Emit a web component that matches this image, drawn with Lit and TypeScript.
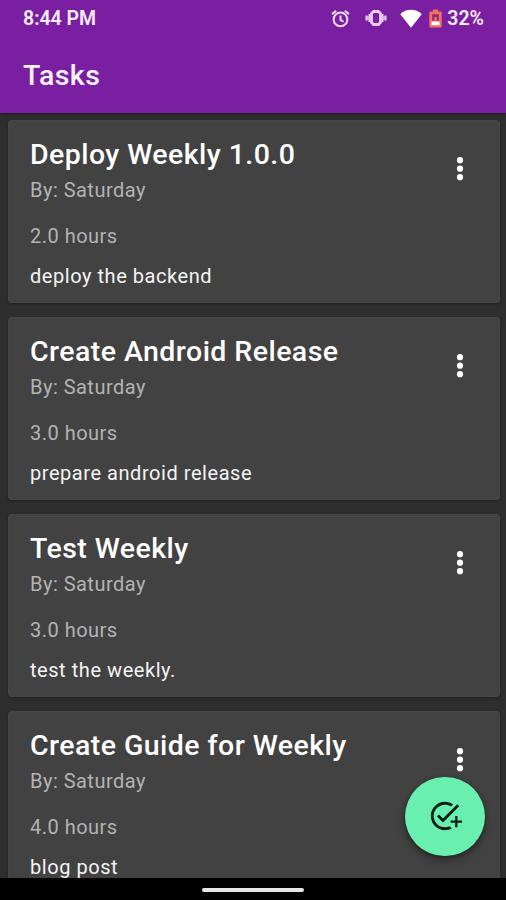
import { LitElement, html, css } from "lit";
import { customElement, property } from "lit/decorators.js";

interface Task {
  title: string;
  due: string;
  hours: string;
  note: string;
}

const TASKS: Task[] = [
  { title: "Deploy Weekly 1.0.0", due: "Saturday", hours: "2.0", note: "deploy the backend" },
  { title: "Create Android Release", due: "Saturday", hours: "3.0", note: "prepare android release" },
  { title: "Test Weekly", due: "Saturday", hours: "3.0", note: "test the weekly." },
  { title: "Create Guide for Weekly", due: "Saturday", hours: "4.0", note: "blog post" },
];

@customElement("status-bar")
export class StatusBar extends LitElement {
  static styles = css`
    :host {
      display: flex;
      align-items: center;
      height: 36px;
      padding: 0 22px 0 23px;
      box-sizing: border-box;
      color: #f8ecfb;
      font-size: 19.5px;
      font-weight: 600;
    }
    .time { flex: 1; }
    svg {
      display: block;
      flex: none;
    }
    .alarm { margin-right: 15px; }
    .vibrate { margin-right: 13px; }
    .wifi { margin-right: 7px; }
    .battery { margin-right: 5px; }
  `;

  render() {
    return html`
      <span class="time">8:44 PM</span>
      <svg class="alarm" width="19" height="19" viewBox="0 0 20 20" fill="none" stroke="#f0dcf6" stroke-width="2.1">
        <circle cx="10" cy="11" r="7.2" />
        <path d="M10 6.8v4.6l3.2 2M1.2 5.4l4.2-3.6M18.8 5.4l-4.2-3.6" />
      </svg>
      <svg class="vibrate" width="22" height="18" viewBox="0 0 22 18" fill="none" stroke="#e7cdef" stroke-width="2">
        <path d="M1.5 6.5v5M4.5 5v8M17.5 5v8M20.5 6.5v5" />
        <path d="M1 9h4M17 9h4" stroke-width="4" opacity=".6" />
        <path d="M8.5 2.5h5l2 2v9l-2 2h-5l-2-2v-9z" stroke-width="2.8" />
      </svg>
      <svg class="wifi" width="22" height="19" viewBox="0 0 22 19" fill="#fff">
        <path d="M11 18.8.3 5.2C3 2.2 6.8.8 11 .8s8 1.4 10.7 4.4z" />
      </svg>
      <svg class="battery" width="13" height="19" viewBox="0 0 13 19">
        <path d="M4 .5h5v2h2.5q1.2 0 1.2 1.2v13.6q0 1.2-1.2 1.2h-10q-1.2 0-1.2-1.2V3.7q0-1.2 1.2-1.2H4z" fill="#f4705f" />
        <path d="M3.2 5.2h6.6v6.600H7.700V8H5.300v3.800H3.200z" fill="#8e2a78" />
        <path d="M2.500 12.500h8V16.200h-8z" fill="#fff" />
      </svg>
      <span>32%</span>
    `;
  }
}

@customElement("task-card")
export class TaskCard extends LitElement {
  @property({ attribute: false }) task!: Task;

  static styles = css`
    :host {
      display: flex;
      flex: none;
      justify-content: space-between;
      height: 183px;
      box-sizing: border-box;
      padding: 19px 32px 0 22px;
      border-radius: 4px;
      background: #424242;
      box-shadow: 0 1px 3px rgba(0, 0, 0, 0.35), inset 0 0 0 1px rgba(255, 255, 255, 0.03);
      color: #f4f4f4;
      font-size: 20px;
      line-height: 24px;
      white-space: nowrap;
    }
    .title {
      margin: 0 0 7px;
      color: #fff;
      font-size: 28.5px;
      line-height: 32px;
      font-weight: 550;
      letter-spacing: 0.44px;
    }
    p {
      margin: 0;
      letter-spacing: 0.55px;
    }
    .muted {
      color: #b3b3b3;
      letter-spacing: 0.48px;
    }
    .hours { margin: 22px 0 16px; }
    .more { margin-top: 16px; }
  `;

  render() {
    const { title, due, hours, note } = this.task;
    return html`
      <div>
        <h2 class="title">${title}</h2>
        <p class="muted">By: ${due}</p>
        <p class="muted hours">${hours} hours</p>
        <p>${note}</p>
      </div>
      <svg class="more" width="16" height="28" viewBox="0 0 16 28" fill="#fff">
        <circle cx="8" cy="5.2" r="3.1" />
        <circle cx="8" cy="13.7" r="3.1" />
        <circle cx="8" cy="22.2" r="3.1" />
      </svg>
    `;
  }
}

@customElement("app-root")
export class AppRoot extends LitElement {
  static styles = css`
    :host {
      display: flex;
      flex-direction: column;
      position: relative;
      width: 506px;
      height: 900px;
      overflow: hidden;
      background: #2e2e2e;
      font-family: Roboto, "Liberation Sans", sans-serif;
    }
    .header {
      flex: none;
      height: 113px;
      background: #7b1fa2;
      box-shadow: 0 1px 3px rgba(0, 0, 0, 0.4);
    }
    .heading {
      margin: 0;
      padding: 24px 0 0 23px;
      color: #fdf2ff;
      font-size: 28.5px;
      line-height: 32px;
      font-weight: 550;
      letter-spacing: 0.44px;
    }
    .list {
      flex: 1;
      min-height: 0;
      overflow: hidden;
      display: flex;
      flex-direction: column;
      gap: 14px;
      padding: 7px 6px 0 8px;
    }
    .fab {
      position: absolute;
      right: 21.5px;
      bottom: 44px;
      display: flex;
      align-items: center;
      justify-content: center;
      width: 79.5px;
      height: 79.5px;
      padding: 0;
      border: 0;
      border-radius: 50%;
      background: #69f0ae;
      box-shadow: 0 5px 10px rgba(0, 0, 0, 0.3), 0 1px 4px rgba(0, 0, 0, 0.3);
    }
    .nav {
      flex: none;
      display: flex;
      justify-content: center;
      height: 22px;
      background: #000;
    }
    .pill {
      width: 102px;
      height: 4px;
      margin-top: 10px;
      border-radius: 2px;
      background: #e6e6e6;
    }
  `;

  render() {
    return html`
      <header class="header">
        <status-bar></status-bar>
        <h1 class="heading">Tasks</h1>
      </header>
      <main class="list">
        ${TASKS.map((task) => html`<task-card .task=${task}></task-card>`)}
      </main>
      <button class="fab" aria-label="Add task">
        <svg width="34" height="34" viewBox="0 0 24 24" fill="#0b1f16">
          <path d="M22 5.18 10.59 16.6l-4.24-4.24 1.41-1.41 2.83 2.83 10-10L22 5.18zM12 20c-4.410 0-8-3.590-8-8s3.590-8 8-8c1.570 0 3.040.46 4.280 1.250l1.450-1.450C16.100 2.670 14.130 2 12 2 6.480 2 2 6.480 2 12s4.480 10 10 10c1.730 0 3.360-.44 4.780-1.220l-1.500-1.500c-1 .46-2.110.72-3.280.72zm7.200-4.800h-3.200v1.600h3.200v3.200h1.600v-3.200h3.200v-1.600h-3.200v-3.200h-1.600v3.200z" />
        </svg>
      </button>
      <footer class="nav"><div class="pill"></div></footer>
    `;
  }
}
